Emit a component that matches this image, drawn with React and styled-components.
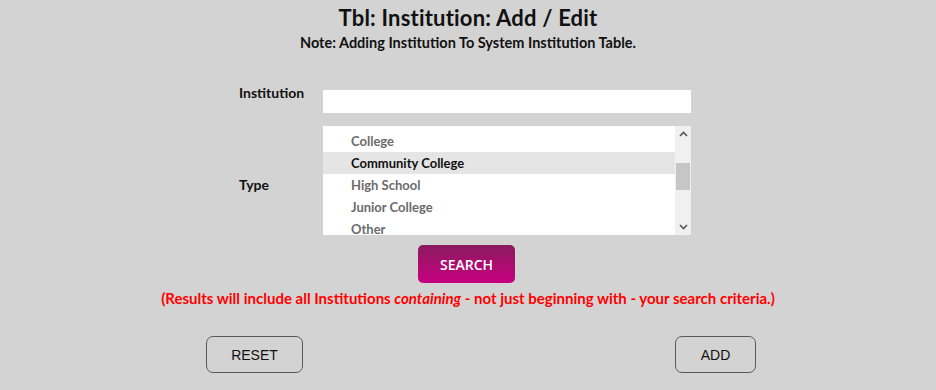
import React from "react";
import styled, { createGlobalStyle } from "styled-components";

const Global = createGlobalStyle`
  html, body { margin: 0; padding: 0; background: #d3d3d3; }
  body { font-family: Lato, "Noto Sans", sans-serif; color: #111; }
`;

const Page = styled.div`
  width: 936px;
  height: 390px;
  display: flex;
  flex-direction: column;
  align-items: center;
  padding-top: 5px;
  box-sizing: border-box;
`;

const Title = styled.h1`
  margin: 0;
  font-size: 22px;
  line-height: 26px;
  font-weight: 700;
  letter-spacing: 0.2px;
  color: #111;
`;

const Subtitle = styled.div`
  margin-top: 3px;
  font-size: 14.5px;
  line-height: 18px;
  font-weight: 700;
  color: #111;
`;

const Form = styled.div`
  margin-top: 38px;
  width: 452px;
  margin-left: -6px;
  display: grid;
  grid-template-columns: 84px 368px;
  row-gap: 13px;
  align-items: center;
`;

const Label = styled.div`
  font-size: 14px;
  font-weight: 700;
  color: #111;
  align-self: ${(p) => p.$align || "center"};
  margin-top: ${(p) => p.$offset || 0}px;
`;

const TextInput = styled.input`
  width: 368px;
  height: 23px;
  box-sizing: border-box;
  border: none;
  outline: none;
  background: #fff;
  padding: 0 6px;
  font-family: inherit;
`;

const ListBox = styled.div`
  width: 368px;
  height: 109px;
  background: #fff;
  display: flex;
  overflow: hidden;
`;

const Items = styled.div`
  flex: 1;
  padding-top: 4px;
`;

const Item = styled.div`
  height: 22px;
  line-height: 22px;
  padding-left: 28px;
  font-size: 13px;
  font-weight: 700;
  color: ${(p) => (p.$selected ? "#111" : "#6b6b6b")};
  background: ${(p) => (p.$selected ? "#e5e5e5" : "transparent")};
`;

const ScrollBar = styled.div`
  width: 16px;
  background: #f0f0f0;
  display: flex;
  flex-direction: column;
  align-items: stretch;
`;

const Arrow = styled.div`
  height: 16px;
  display: flex;
  align-items: center;
  justify-content: center;
`;

const Track = styled.div`
  flex: 1;
  padding-top: 21px;
`;

const Thumb = styled.div`
  height: 27px;
  margin: 0 1px;
  background: #c6c6c6;
`;

const SearchButton = styled.button`
  margin-top: 10px;
  margin-left: -3px;
  width: 97px;
  height: 38px;
  border: none;
  border-radius: 5px;
  background: linear-gradient(#8b1b5f, #c8007f);
  color: #fff;
  font-family: "Open Sans", sans-serif;
  font-size: 14px;
  font-weight: 600;
  cursor: pointer;
`;

const Notice = styled.p`
  margin: 6px 0 0;
  font-size: 15px;
  font-weight: 700;
  color: #ff0000;
  line-height: 18px;
  em { font-style: italic; }
`;

const Footer = styled.div`
  margin-top: 29px;
  width: 550px;
  margin-left: 26px;
  display: flex;
  justify-content: space-between;
`;

const PlainButton = styled.button`
  width: ${(p) => p.$w}px;
  height: 37px;
  box-sizing: border-box;
  border: 1px solid #5a5a5a;
  border-radius: 7px;
  background: transparent;
  font-family: "Liberation Sans", Arial, sans-serif;
  font-size: 14px;
  color: #111;
  cursor: pointer;
`;

const Chevron = ({ up }) => (
  <svg width="9" height="6" viewBox="0 0 9 6">
    <path
      d={up ? "M1 5 L4.5 1.5 L8 5" : "M1 1 L4.5 4.5 L8 1"}
      fill="none"
      stroke="#555"
      strokeWidth="1.6"
    />
  </svg>
);

const types = ["College", "Community College", "High School", "Junior College", "Other"];

export default function App() {
  return (
    <>
      <Global />
      <Page>
        <Title>Tbl: Institution: Add / Edit</Title>
        <Subtitle>Note: Adding Institution To System Institution Table.</Subtitle>
        <Form>
          <Label $align="start" $offset={-6}>Institution</Label>
          <TextInput type="text" />
          <Label $offset={7}>Type</Label>
          <ListBox>
            <Items>
              {types.map((t) => (
                <Item key={t} $selected={t === "Community College"}>
                  {t}
                </Item>
              ))}
            </Items>
            <ScrollBar>
              <Arrow><Chevron up /></Arrow>
              <Track><Thumb /></Track>
              <Arrow><Chevron /></Arrow>
            </ScrollBar>
          </ListBox>
        </Form>
        <SearchButton>SEARCH</SearchButton>
        <Notice>
          (Results will include all Institutions <em>containing</em> - not just beginning with - your search criteria.)
        </Notice>
        <Footer>
          <PlainButton $w={97}>RESET</PlainButton>
          <PlainButton $w={81}>ADD</PlainButton>
        </Footer>
      </Page>
    </>
  );
}
